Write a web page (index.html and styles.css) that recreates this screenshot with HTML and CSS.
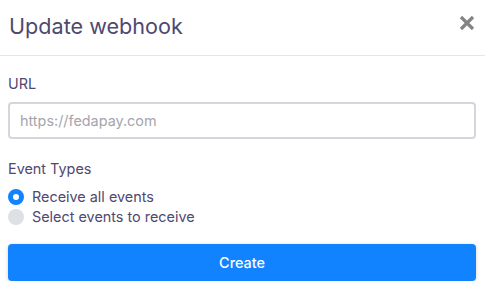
FILE: index.html
```html
<!DOCTYPE html>
<html>
<head>
<meta charset="utf-8">
<link rel="stylesheet" href="styles.css">
</head>
<body>
<div class="modal">
  <div class="header">
    <h1 class="title">Update webhook</h1>
    <button class="close" aria-label="Close">
      <svg width="16" height="16" viewBox="0 0 16 16"><path d="M2 2L14 14M14 2L2 14" stroke="#848484" stroke-width="3.2" stroke-linecap="butt"/></svg>
    </button>
  </div>
  <div class="body">
    <label class="label">URL</label>
    <input class="input" type="text" placeholder="https://fedapay.com">
    <div class="label types">Event Types</div>
    <div class="radios">
      <label class="radio"><span class="dot checked"></span>Receive all events</label>
      <label class="radio"><span class="dot"></span>Select events to receive</label>
    </div>
    <button class="btn">Create</button>
  </div>
</div>
</body>
</html>
```
FILE: styles.css
```css
* { box-sizing: border-box; }
html, body { margin: 0; padding: 0; background: #fff; }
body { font-family: Inter, "Noto Sans", sans-serif; color: #4f4870; }
.modal { width: 485px; }
.header { display: flex; align-items: center; justify-content: space-between; height: 56px; padding: 0 10px 0 9px; border-bottom: 1px solid #e5e5ea; }
.title { margin: 0; font-size: 21.6px; font-weight: 400; color: #4f4870; margin-top: -3px; }
.close { border: 0; background: none; padding: 0; width: 16px; height: 16px; display: flex; align-items: center; justify-content: center; margin-top: -10px; }
.body { padding: 19px 9px 0 8px; display: flex; flex-direction: column; }
.label { font-size: 14.4px; color: #4f4870; line-height: 18px; }
.input { margin-top: 9px; height: 37px; width: 468px; border: 2px solid #d4d6db; border-radius: 4px; padding: 0 10px; font-family: inherit; font-size: 14.4px; color: #333; outline: none; }
.input::placeholder { color: #a5a5ad; }
.types { margin-top: 21px; }
.radios { margin-top: 10px; display: flex; flex-direction: column; gap: 2px; }
.radio { display: flex; align-items: center; gap: 8px; font-size: 14.4px; line-height: 18px; color: #4f4870; }
.dot { width: 16px; height: 16px; border-radius: 50%; background: #dde0e5; }
.dot.checked { background: #fff; border: 5px solid #1283ff; }
.btn { margin-top: 18px; width: 468px; height: 37px; border: 0; border-radius: 4px; background: #1283ff; color: #fff; font-family: inherit; font-size: 14.4px; font-weight: 500; box-shadow: 0 1px 4px rgba(0,0,0,0.18); }
```
